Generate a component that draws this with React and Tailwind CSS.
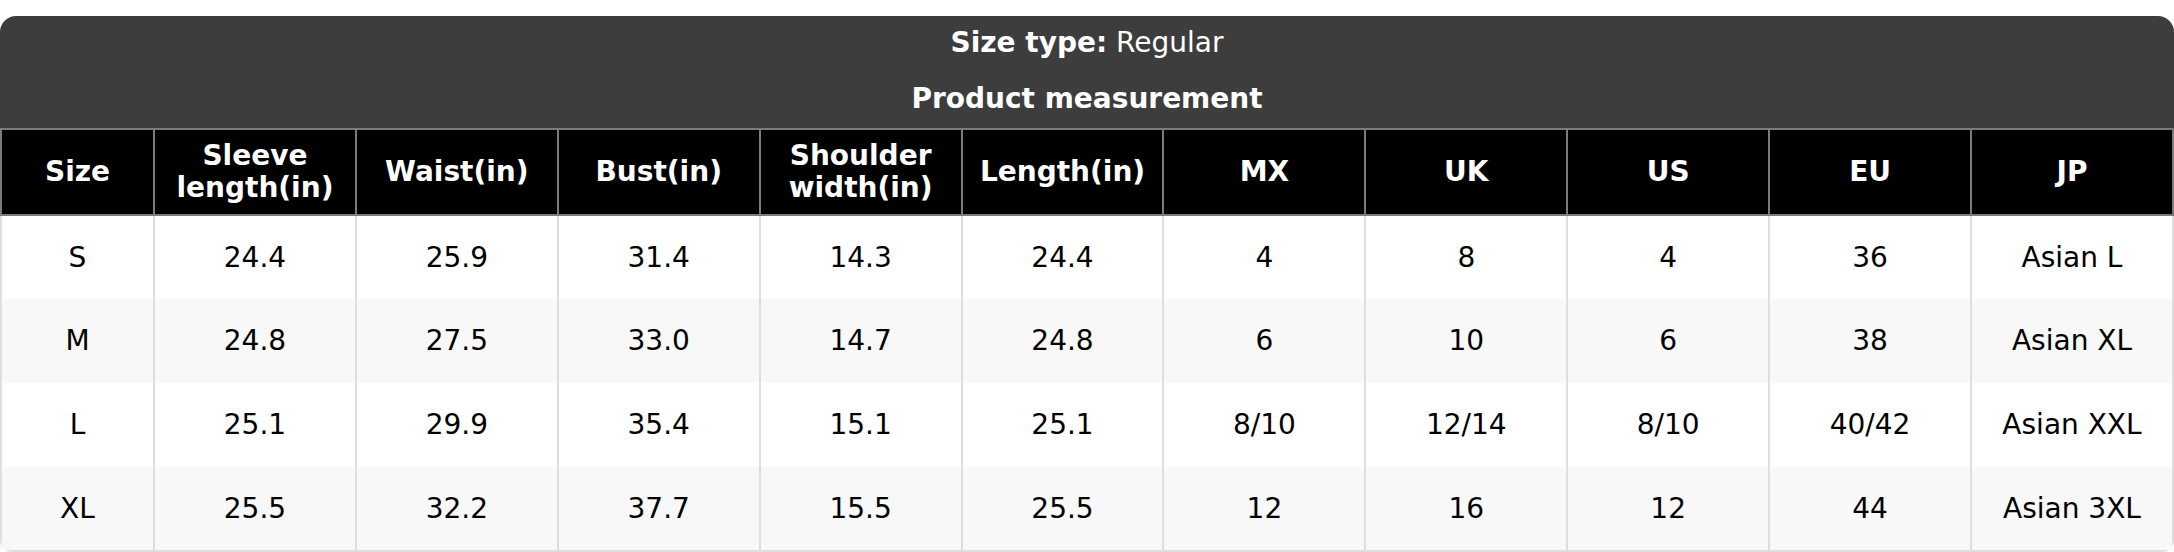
const columns = [
  "Size",
  "Sleeve length(in)",
  "Waist(in)",
  "Bust(in)",
  "Shoulder width(in)",
  "Length(in)",
  "MX",
  "UK",
  "US",
  "EU",
  "JP",
];

const rows = [
  ["S", "24.4", "25.9", "31.4", "14.3", "24.4", "4", "8", "4", "36", "Asian L"],
  ["M", "24.8", "27.5", "33.0", "14.7", "24.8", "6", "10", "6", "38", "Asian XL"],
  ["L", "25.1", "29.9", "35.4", "15.1", "25.1", "8/10", "12/14", "8/10", "40/42", "Asian XXL"],
  ["XL", "25.5", "32.2", "37.7", "15.5", "25.5", "12", "16", "12", "44", "Asian 3XL"],
];

export default function App() {
  return (
    <div
      className="min-h-screen bg-white pt-4"
      style={{ fontFamily: '"DejaVu Sans", Verdana, sans-serif' }}
    >
      <div className="overflow-hidden rounded-t-[16px] rounded-b-[12px]">
        <div className="flex h-[112px] flex-col items-center bg-[#3d3d3d] pt-[11px] text-[28px] leading-[32px] text-white">
          <div>
            <span className="font-bold">Size type:</span> Regular
          </div>
          <div className="mt-[24px] font-bold">Product measurement</div>
        </div>

        <table className="w-full table-fixed border-collapse text-[28px] leading-[32px]">
          <colgroup>
            <col className="w-[153px]" />
            {columns.slice(1).map((c) => (
              <col key={c} />
            ))}
          </colgroup>
          <thead>
            <tr className="h-[86px] bg-black text-white">
              {columns.map((c) => (
                <th
                  key={c}
                  className="border-2 border-[#7a7a7a] px-2 text-center font-bold"
                >
                  {c}
                </th>
              ))}
            </tr>
          </thead>
          <tbody>
            {rows.map((r, i) => (
              <tr
                key={r[0]}
                className={`h-[84px] ${i % 2 ? "bg-[#f8f8f8]" : "bg-white"}`}
              >
                {r.map((v, j) => (
                  <td
                    key={j}
                    className={`border-x-2 border-[#dedede] px-2 text-center text-black ${
                      i === rows.length - 1 ? "border-b-2" : ""
                    }`}
                  >
                    {v}
                  </td>
                ))}
              </tr>
            ))}
          </tbody>
        </table>
      </div>
    </div>
  );
}
